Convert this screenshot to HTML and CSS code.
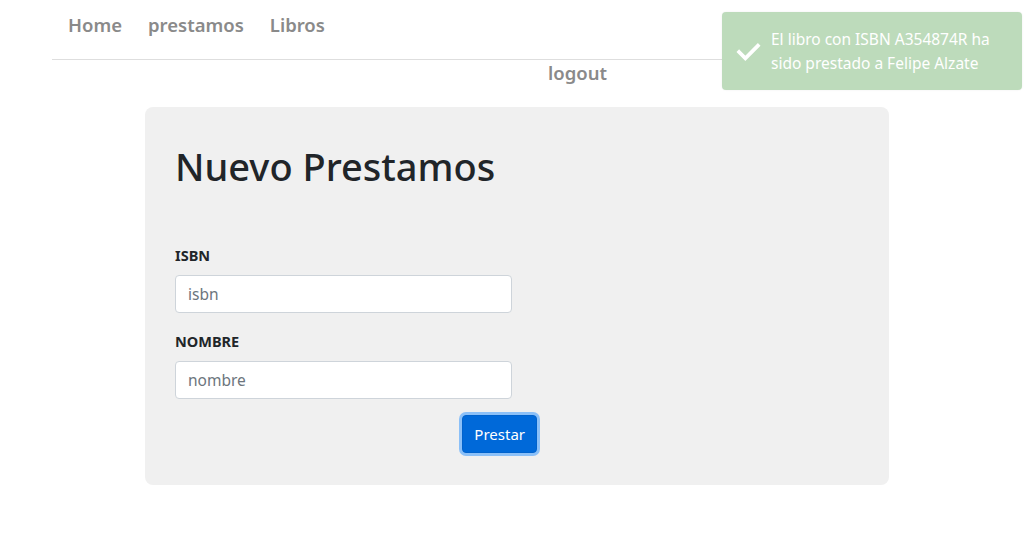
FILE: index.html
```html
<!DOCTYPE html>
<html lang="es">
<head>
<meta charset="utf-8">
<title>Nuevo Prestamos</title>
<link rel="stylesheet" href="styles.css">
</head>
<body>
<div class="container">
  <nav class="nav">
    <a class="nav-link" href="#">Home</a>
    <a class="nav-link" href="#">prestamos</a>
    <a class="nav-link" href="#">Libros</a>
  </nav>
  <div class="nav-right">
    <a class="nav-link" href="#">logout</a>
  </div>
</div>

<main class="card">
  <h1 class="title">Nuevo Prestamos</h1>
  <form class="form">
    <label class="label" for="isbn">ISBN</label>
    <input class="input" id="isbn" type="text" placeholder="isbn">
    <label class="label" for="nombre">NOMBRE</label>
    <input class="input" id="nombre" type="text" placeholder="nombre">
    <div class="actions">
      <button class="btn" type="button">Prestar</button>
    </div>
  </form>
</main>

<div class="toast">
  <svg class="check" viewBox="0 0 24 24" width="25" height="25" aria-hidden="true">
    <path d="M3 12.5 L9 18.5 L21 6.5" fill="none" stroke="#fff" stroke-width="3.6" stroke-linecap="square"/>
  </svg>
  <p class="toast-text">El libro con ISBN A354874R ha sido prestado a Felipe Alzate</p>
</div>
</body>
</html>
```

FILE: styles.css
```css
* { box-sizing: border-box; }
body {
  margin: 0;
  font-family: "Noto Sans", "Open Sans", sans-serif;
  color: #212529;
  background: #fff;
}
.container {
  width: 930px;
  margin: 0 0 0 52px;
}
.nav {
  display: flex;
  gap: 26px;
  padding: 10px 16px 0;
  height: 60px;
  border-bottom: 1px solid #dedede;
}
.nav-link {
  font-size: 18.5px;
  font-weight: 600;
  color: #8a8a8a;
  text-decoration: none;
  line-height: 30px;
}
.nav-right {
  padding-left: 496px;
  height: 26px;
  line-height: 26px;
}
.nav-right .nav-link { line-height: 26px; }
.card {
  width: 744px;
  margin: 21px 0 0 145px;
  background: #f0f0f0;
  border-radius: 8px;
  padding: 36px 30px 32px;
}
.title {
  margin: 0 0 56px;
  font-size: 38px;
  font-weight: 500;
  line-height: 46px;
  color: #212529;
}
.form {
  display: flex;
  flex-direction: column;
  width: 337px;
}
.label {
  font-size: 14.5px;
  font-weight: 700;
  line-height: 20px;
  margin-bottom: 10px;
}
.input {
  width: 337px;
  height: 38px;
  border: 1px solid #ced4da;
  border-radius: 4px;
  background: #fff;
  padding: 6px 12px;
  font-family: inherit;
  font-size: 15.5px;
  color: #495057;
  margin-bottom: 18px;
}
.input::placeholder { color: #6c757d; }
.actions {
  display: flex;
  justify-content: flex-end;
  margin-top: -2px;
  margin-right: -25px;
}
.btn {
  height: 38px;
  padding: 0 11px;
  border: 1px solid #0062cc;
  border-radius: 4px;
  background: #0069d9;
  color: #fff;
  font-family: inherit;
  font-size: 15px;
  box-shadow: 0 0 0 3px rgba(38,143,255,.5);
}
.toast {
  position: absolute;
  top: 12px;
  left: 722px;
  width: 300px;
  height: 78px;
  background: #bddbbb;
  border-radius: 4px;
  display: flex;
  align-items: center;
  gap: 10px;
  padding: 0 14px;
  box-shadow: 0 0 2px rgba(0,0,0,.08);
}
.check { flex: none; }
.toast-text {
  margin: 0;
  color: #fff;
  font-size: 15.5px;
  line-height: 24px;
}
```
